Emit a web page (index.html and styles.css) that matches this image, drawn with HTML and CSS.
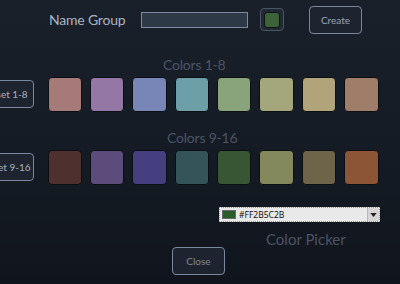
FILE: index.html
```html
<!DOCTYPE html>
<html lang="en">
<head>
    <meta charset="UTF-8">
    <meta name="viewport" content="width=device-width, initial-scale=1.0">
    <title>Color Groups</title>
    <link rel="stylesheet" href="styles.css">
</head>
<body>
    <div class="window">
        <div class="top-bar">
            <span class="name-label">Name Group</span>
            <input class="name-input" type="text">
            <button class="swatch-btn"><span class="swatch-btn-fill"></span></button>
            <button class="btn btn-create">Create</button>
        </div>

        <div class="group-title title-first">Colors 1-8</div>
        <div class="color-row">
            <button class="btn btn-reset">Reset 1-8</button>
            <div class="swatches">
                <div class="swatch" style="background-color: #a67a78"></div>
                <div class="swatch" style="background-color: #9577a6"></div>
                <div class="swatch" style="background-color: #7786b6"></div>
                <div class="swatch" style="background-color: #6d9fa9"></div>
                <div class="swatch" style="background-color: #89a37a"></div>
                <div class="swatch" style="background-color: #a4a77c"></div>
                <div class="swatch" style="background-color: #b2a47a"></div>
                <div class="swatch" style="background-color: #a07d68"></div>
            </div>
        </div>

        <div class="group-title title-second">Colors 9-16</div>
        <div class="color-row">
            <button class="btn btn-reset">Reset 9-16</button>
            <div class="swatches">
                <div class="swatch" style="background-color: #4e302f"></div>
                <div class="swatch" style="background-color: #5c4c7b"></div>
                <div class="swatch" style="background-color: #463f7f"></div>
                <div class="swatch" style="background-color: #345459"></div>
                <div class="swatch" style="background-color: #385633"></div>
                <div class="swatch" style="background-color: #83895d"></div>
                <div class="swatch" style="background-color: #6d6449"></div>
                <div class="swatch" style="background-color: #8c5536"></div>
            </div>
        </div>

        <div class="picker">
            <div class="combo">
                <span class="combo-swatch"></span>
                <span class="combo-text">#FF2B5C2B</span>
                <span class="combo-arrow">
                    <svg viewBox="0 0 8 5" width="7" height="4"><path d="M0 0h8L4 5z" fill="#222"/></svg>
                </span>
            </div>
            <div class="picker-label">Color Picker</div>
        </div>

        <button class="btn btn-close">Close</button>
    </div>
</body>
</html>
```

FILE: styles.css
```css
* {
    margin: 0;
    padding: 0;
    box-sizing: border-box;
}

body {
    font-family: Lato, 'Noto Sans', sans-serif;
    background: #151b24;
    overflow: hidden;
}

.window {
    width: 400px;
    height: 284px;
    overflow: hidden;
    background: linear-gradient(180deg, #1a202a 0%, #151b24 55%, #10151d 100%);
}

/* top bar */
.top-bar {
    display: flex;
    align-items: center;
    height: 28px;
    margin-top: 6px;
    padding-left: 49px;
}

.name-label {
    font-size: 14px;
    letter-spacing: -0.2px;
    color: #a9b4c3;
    width: 92px;
    white-space: nowrap;
    margin-top: -2px;
}

.name-input {
    width: 107px;
    height: 16px;
    background: #2e3948;
    border: 1px solid #7c8aa0;
    outline: none;
}

.swatch-btn {
    width: 24px;
    height: 23px;
    margin-left: 12px;
    margin-top: -1px;
    background: #202834;
    border: 1px solid #4a5465;
    border-radius: 4px;
    display: flex;
    align-items: center;
    justify-content: center;
}

.swatch-btn-fill {
    width: 16px;
    height: 16px;
    background: #3d6139;
    border: 1px solid #0f1410;
    border-radius: 3px;
}

.btn {
    font-family: Lato, 'Noto Sans', sans-serif;
    font-size: 10px;
    color: #9aa5b4;
    background: #1d2430;
    border: 1px solid #7a879c;
    border-radius: 4px;
    white-space: nowrap;
}

.btn-create {
    width: 53px;
    height: 28px;
    margin-left: 25px;
}

/* colour groups */
.group-title {
    font-size: 14px;
    letter-spacing: -0.2px;
    line-height: 18px;
    color: #4a5566;
    white-space: nowrap;
}

.title-first {
    margin: 22px 0 0 163px;
}

.title-second {
    margin: 17px 0 0 167px;
}

.color-row {
    display: flex;
    align-items: center;
    height: 35px;
    margin-top: 3px;
}

.btn-reset {
    width: 55px;
    height: 28px;
    margin-left: -21px;
    margin-top: -2px;
    color: #a7b1bf;
}

.swatches {
    display: flex;
    gap: 8px;
    margin-left: 13.5px;
}

.swatch {
    width: 34.4px;
    height: 35px;
    border: 1px solid #0b0f14;
    border-radius: 4px;
}

/* colour picker */
.picker {
    margin: 22px 0 0 219px;
}

.combo {
    display: flex;
    align-items: center;
    width: 161px;
    height: 15px;
    background: #e9e9e9;
    border: 1px dotted #8e9aa6;
}

.combo-swatch {
    width: 14px;
    height: 9px;
    margin-left: 2px;
    background: #2b5c2b;
    border: 1px solid #6a6a6a;
}

.combo-text {
    font-family: 'Noto Sans', sans-serif;
    font-size: 8.5px;
    color: #111;
    margin-left: 3px;
    flex: 1;
}

.combo-arrow {
    width: 12px;
    height: 13px;
    background: #d6d6d6;
    border-left: 1px solid #b8b8b8;
    display: flex;
    align-items: center;
    justify-content: center;
}

.picker-label {
    font-size: 15px;
    line-height: 16px;
    color: #4a5464;
    margin: 9px 0 0 47px;
}

.btn-close {
    display: block;
    width: 53px;
    height: 28px;
    margin: 0 0 0 172px;
    color: #7d8796;
}
```
